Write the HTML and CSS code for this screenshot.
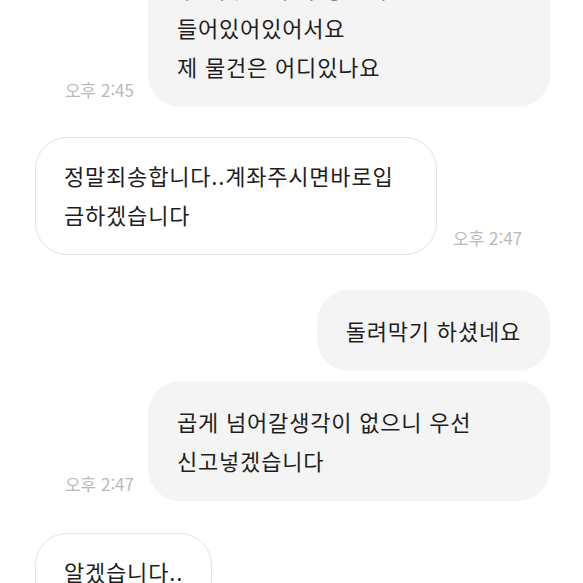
FILE: index.html
```html
<!DOCTYPE html>
<html lang="ko">
<head>
    <meta charset="UTF-8">
    <meta name="viewport" content="width=device-width, initial-scale=1.0">
    <title>채팅</title>
    <link rel="stylesheet" href="styles.css">
</head>
<body>
    <div class="chat">
        <div class="row sent">
            <span class="time">오후 2:45</span>
            <div class="bubble full">두 개였는데 다 상품에<br>들어있어있어서요<br>제 물건은 어디있나요</div>
        </div>

        <div class="row received gap-30">
            <div class="bubble">정말죄송합니다..계좌주시면바로입금하겠습니다</div>
            <span class="time">오후 2:47</span>
        </div>

        <div class="row sent gap-35">
            <div class="bubble">돌려막기 하셨네요</div>
        </div>

        <div class="row sent gap-10">
            <span class="time">오후 2:47</span>
            <div class="bubble keep">곱게 넘어갈생각이 없으니 우선 신고넣겠습니다</div>
        </div>

        <div class="row received gap-32">
            <div class="bubble">알겠습니다..</div>
        </div>
    </div>
</body>
</html>
```

FILE: styles.css
```css
html, body {
    margin: 0;
    padding: 0;
    height: 583px;
    background-color: #ffffff;
    overflow: hidden;
}
body {
    font-family: "Noto Sans CJK KR", "Noto Sans", sans-serif;
    color: #1e1e1e;
}
.chat {
    display: flex;
    flex-direction: column;
    /* scrolled part way down the conversation */
    margin-top: -52px;
}
.row {
    display: flex;
    align-items: flex-end;
}
.row.sent {
    justify-content: flex-end;
    padding-right: 33px;
}
.row.received {
    justify-content: flex-start;
    padding-left: 35px;
}
.gap-30 {
    margin-top: 30px;
}
.gap-32 {
    margin-top: 32px;
}
.gap-35 {
    margin-top: 35px;
}
.gap-10 {
    margin-top: 10px;
}
.bubble {
    max-width: 402px;
    box-sizing: border-box;
    border-radius: 32px;
    font-size: 22px;
    letter-spacing: 0.8px;
    line-height: 39px;
}
.bubble.full {
    width: 404px;
}
.bubble.keep {
    word-break: keep-all;
}
.sent .bubble {
    background-color: #f4f4f4;
    padding: 21px 29px;
}
.received .bubble {
    background-color: #ffffff;
    border: 1px solid #e3e3e3;
    padding: 18px 28px 20px;
}
.time {
    font-size: 17px;
    color: #bababa;
    white-space: nowrap;
    padding-bottom: 5px;
}
.sent .time {
    margin-right: 14px;
}
.received .time {
    margin-left: 16px;
}
```
